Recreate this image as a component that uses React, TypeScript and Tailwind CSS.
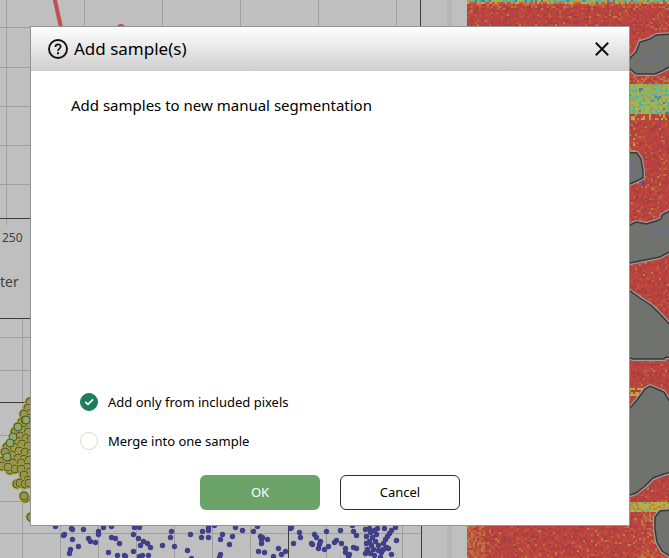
import { useState } from 'react';

type Point = [number, number];

const MAP_WIDTH = 202;
const MAP_HEIGHT = 558;

const BLUE_POINTS: Point[] = [
  [55, 526], [71, 528], [72, 529], [83, 529], [103, 527], [111, 526], [134, 527], [139, 527],
  [64, 534], [63, 535], [72, 539], [78, 546], [70, 549], [69, 553], [88, 538], [90, 541],
  [95, 542], [98, 531], [98, 534], [111, 537], [115, 538], [119, 543], [108, 552], [117, 555],
  [124, 555], [125, 556], [133, 534], [138, 538], [143, 541], [147, 543], [140, 545], [150, 547],
  [133, 551], [139, 556], [142, 555], [148, 555], [171, 531], [170, 537], [162, 545], [174, 546],
  [187, 550], [190, 534], [191, 558], [202, 531], [201, 537], [208, 527], [208, 530], [208, 537],
  [214, 525], [222, 534], [220, 539], [232, 536], [229, 544], [220, 554], [219, 557], [235, 527],
  [242, 530], [253, 531], [257, 526], [260, 536], [262, 537], [261, 539], [267, 539], [261, 543],
  [258, 551], [264, 552], [273, 556], [278, 548], [281, 554], [285, 551], [290, 528], [291, 527],
  [299, 532], [300, 537], [293, 543], [314, 534], [316, 537], [320, 541], [311, 543], [312, 544],
  [319, 544], [318, 548], [324, 549], [328, 546], [326, 531], [334, 542], [336, 540], [341, 543],
  [340, 530], [345, 548], [345, 552], [349, 554], [348, 556], [353, 547], [356, 548], [353, 531],
  [356, 535], [352, 525], [365, 529], [369, 528], [377, 528], [384, 528], [391, 530], [395, 527],
  [370, 532], [374, 530], [366, 536], [372, 537], [369, 541], [375, 541], [366, 543], [371, 545],
  [378, 545], [367, 549], [373, 549], [365, 553], [370, 553], [378, 550], [381, 552], [376, 534],
  [374, 555], [380, 557], [389, 533], [387, 536], [385, 539], [383, 543], [386, 547], [383, 549],
  [396, 540], [391, 554], [388, 548],
];

const OLIVE_POINTS: Point[] = [
  [30, 402], [28, 408], [31, 413], [24, 414], [29, 418], [22, 422], [25, 420], [30, 425],
  [18, 427], [23, 430], [28, 432], [15, 432], [20, 436], [26, 438], [31, 439], [17, 441],
  [22, 444], [28, 446], [7, 447], [14, 447], [19, 451], [25, 452], [31, 453], [5, 452],
  [12, 455], [18, 458], [24, 459], [29, 460], [3, 461], [2, 466], [13, 463], [21, 463],
  [27, 467], [10, 470], [8, 467], [15, 469], [21, 469], [30, 472], [24, 475], [28, 480],
  [17, 484], [20, 483], [25, 484], [29, 483], [25, 498], [24, 496], [31, 517],
];

const GREEN_POINTS: Point[] = [[26, 420], [18, 427], [13, 437], [10, 443], [7, 457]];

const REGIONS = [
  'M161 62 L164 57 L169 52 L173 42 L183 39 L189 35 L204 34 V66 L195 71 L188 74 L169 74 L163 69 Z',
  'M155 152 L170 153 L174 159 L176 171 L176 178 L163 184 H155 Z',
  'M155 226 L163 225 L169 222 L175 223 L179 224 L189 221 L194 219 L195 215 L204 210 V251 L193 257 L178 260 L163 263 H155 Z',
  'M155 288 L163 291 L173 298 L185 306 L194 315 L204 326 V358 L199 357 L197 359 H166 L163 358 H155 Z',
  'M155 415 L163 408 L170 400 L178 389 L183 386 L190 389 L197 392 L204 404 V472 L197 474 L186 478 L178 486 L169 493 L163 495 H155 Z',
  'M204 510 L193 511 L188 517 L188 530 L190 542 L195 551 L204 557 Z',
];

// small deterministic generator so the map looks the same on every render
function createRandom(seed: number) {
  let s = seed;
  return () => {
    s = (s * 1664525 + 1013904223) % 4294967296;
    return s / 4294967296;
  };
}

const RED_TONES = ['#ae413f', '#c2433c', '#bb4a3c', '#bf4d3d', '#b53f42', '#a0403f'];
const WARM_TONES = ['#bf6440', '#b8803f', '#c0603c', '#c0523d'];
const BAND_TONES = ['#b5b244', '#a5b34e', '#8fb560', '#6cb58c', '#4fb3ad', '#bc9d40'];
const LIME_TONES = ['#b5b244', '#b9a040', '#bd8640', '#a5b34e', '#c0aa3c'];
const TOP_TONES = ['#4fb3ad', '#6cb58c', '#3f83b5', '#a5b34e', '#bc9d40'];

function pickTone(x: number, y: number, random: () => number) {
  const pick = (tones: string[]) => tones[Math.floor(random() * tones.length)];
  const r = random();
  if (y < 2) return pick(TOP_TONES);
  if (y < 4) return r < 0.5 ? pick(LIME_TONES) : pick(WARM_TONES);
  if (y < 8 && r < 0.4) return pick(WARM_TONES);
  if (y >= 84 && y < 114) return r < 0.06 ? '#3f83b5' : pick(BAND_TONES);
  if (y >= 114 && y < 119 && r < 0.35) return pick(LIME_TONES);
  if (y >= 76 && y < 84 && r < 0.4) return pick(WARM_TONES);
  if (y >= 501 && y < 512) return r < 0.1 ? '#52b3a5' : pick(LIME_TONES);
  if (y >= 388 && y < 395 && x < 178 && r < 0.6) return pick(LIME_TONES);
  if (y >= 130 && y < 156 && x < 168 && r < 0.35) return pick(LIME_TONES);
  if (y >= 512 && x > 172 && x < 192 && r < 0.5) return pick(WARM_TONES);
  if (y > 520 && x < 18 && r < 0.6) return pick(WARM_TONES);
  if (r < 0.1) return pick(WARM_TONES);
  return r < 0.75 ? pick(RED_TONES) : null;
}

function buildTiles() {
  const random = createRandom(17);
  const tiles: Record<string, string> = {};
  for (let y = 0; y < MAP_HEIGHT; y += 2) {
    for (let x = 0; x < MAP_WIDTH; x += 2) {
      const tone = pickTone(x, y, random);
      if (tone) tiles[tone] = (tiles[tone] ?? '') + `M${x} ${y}h2v2h-2z`;
    }
  }
  return Object.entries(tiles);
}

const TILES = buildTiles();

function ScatterCharts() {
  return (
    <svg
      viewBox="0 0 467 558"
      className="h-[558px] w-[467px] shrink-0 bg-[#bfbfbf]"
      role="img"
      aria-label="Scatter charts"
    >
      <g stroke="#9f9f9f" shapeRendering="crispEdges">
        {/* upper chart grid */}
        <path d="M6.5 0V225M84.5 0V218M162.5 0V218M240.5 0V218M318.5 0V218M396.5 0V218" />
        <path d="M0 27.5H420M0 67.5H420M0 106.5H420M0 145.5H420M0 184.5H420" />
        {/* lower chart grid */}
        <path d="M22.5 318V558M60.5 318V558M98.5 318V558M136.5 318V558M174.5 318V558M212.5 318V558M250.5 318V558M326.5 318V558M364.5 318V558M402.5 318V558" />
        <path d="M0 337.5H421M0 370.5H421M0 435.5H421M0 468.5H421M0 501.5H421M0 533.5H421" />
      </g>
      <path
        d="M420.5 0V218M0 218.5H421M0 318.5H421M421.5 318V558M0 402.5H421M288.5 318V558"
        stroke="#3c3c3c"
        fill="none"
        shapeRendering="crispEdges"
      />
      <rect x="447" width="5" height="558" fill="#b6b6b6" />

      <path d="M54.500 -2L62 32" stroke="#bf5153" strokeWidth="4" />
      <circle cx="121" cy="28" r="4" fill="#bf5153" />

      <g fontFamily='"Noto Sans", sans-serif' fill="#3f3f3f">
        <text x="2" y="242" fontSize="12">250</text>
        <text x="0" y="287" fontSize="14">ter</text>
      </g>

      <g fill="#97954f" stroke="#56552a">
        {OLIVE_POINTS.map(([x, y], i) => (
          <g key={i}>
            <circle cx={x} cy={y} r="5" stroke="#a9a637" />
            <circle cx={x} cy={y} r="4" />
          </g>
        ))}
      </g>
      <g fill="#8bab6b" stroke="#56552a">
        {GREEN_POINTS.map(([x, y], i) => (
          <circle key={i} cx={x} cy={y} r="4" />
        ))}
      </g>
      <g fill="#403f8a">
        {BLUE_POINTS.map(([x, y], i) => (
          <circle key={i} cx={x + 0.5} cy={y + 0.5} r="2.700" />
        ))}
      </g>
    </svg>
  );
}

function SegmentationMap() {
  return (
    <div className="h-[558px] min-w-0 flex-1 overflow-hidden">
      <svg
        viewBox="0 0 202 558"
        preserveAspectRatio="xMinYMin slice"
        className="h-full w-full"
        role="img"
        aria-label="Segmentation map"
      >
        <rect width="202" height="558" fill="#bb423e" />
        <g shapeRendering="crispEdges">
          {TILES.map(([tone, d]) => (
            <path key={tone} d={d} fill={tone} />
          ))}
        </g>
        {REGIONS.map((d) => (
          <g key={d}>
            <path d={d} fill="#70726d" stroke="#a09c98" strokeWidth="4" />
            <path d={d} fill="#70726d" stroke="#39373b" strokeWidth="1.500" />
          </g>
        ))}
        <g fill="#70707f" opacity="0.7">
          <ellipse cx="186" cy="58" rx="12" ry="5" />
          <ellipse cx="190" cy="231" rx="12" ry="5" />
          <ellipse cx="164" cy="169" rx="6" ry="9" />
        </g>
        <rect x="175" y="182" width="2" height="3" fill="#3d57b5" />
      </svg>
    </div>
  );
}

interface RoundCheckProps {
  id: string;
  label: string;
  checked: boolean;
  onChange: (checked: boolean) => void;
}

function RoundCheck({ id, label, checked, onChange }: RoundCheckProps) {
  return (
    <div className="flex h-5 items-center gap-2.5">
      <span className="relative flex h-[18px] w-[18px]">
        <input
          id={id}
          type="checkbox"
          checked={checked}
          onChange={(e) => onChange(e.target.checked)}
          className="h-[18px] w-[18px] cursor-pointer appearance-none rounded-full border border-[#d9d9d4] bg-white checked:border-[#1c7f59] checked:bg-[#1c7f59]"
        />
        {checked && (
          <svg viewBox="0 0 18 18" className="pointer-events-none absolute inset-0" fill="none">
            <path d="M5.200 8.800L8 11.300L13 6.300" stroke="#fff" strokeWidth="1.800" />
          </svg>
        )}
      </span>
      <label htmlFor={id} className="cursor-pointer text-[13px] leading-5">
        {label}
      </label>
    </div>
  );
}

function AddSampleDialog() {
  const [includedOnly, setIncludedOnly] = useState(true);
  const [merge, setMerge] = useState(false);

  return (
    <div
      role="dialog"
      aria-labelledby="dialog-title"
      className="flex min-h-[500px] w-full flex-col border border-[#949494] bg-white text-black"
    >
      <header className="flex h-11 items-center justify-between bg-gradient-to-b from-white to-[#cecece] pr-5 pl-4">
        <div className="flex items-center gap-[3px]">
          <svg viewBox="0 0 24 24" className="h-6 w-6" fill="none" stroke="#111">
            <circle cx="11" cy="12" r="9" strokeWidth="1.900" />
            <path d="M8.400 10C8.400 6.400 13.700 6.500 13.700 9.600C13.700 11.700 11 11.500 11 14" strokeWidth="1.700" />
            <path d="M11 15.300V17.200" strokeWidth="2" />
          </svg>
          <h1 id="dialog-title" className="text-[17px] leading-6">Add sample(s)</h1>
        </div>
        <button type="button" aria-label="Close" className="cursor-pointer">
          <svg viewBox="0 0 14 14" className="h-3.5 w-3.5" stroke="#111" strokeWidth="2">
            <path d="M0.800 0.800L13.200 13.200M13.200 0.800L0.800 13.200" />
          </svg>
        </button>
      </header>

      <div className="flex flex-1 flex-col justify-between px-10 pt-6 pb-[15px]">
        <p className="text-[15px] leading-5">Add samples to new manual segmentation</p>
        <div>
          <div className="flex flex-col gap-[19px] px-[9px]">
            <RoundCheck
              id="included-only"
              label="Add only from included pixels"
              checked={includedOnly}
              onChange={setIncludedOnly}
            />
            <RoundCheck id="merge" label="Merge into one sample" checked={merge} onChange={setMerge} />
          </div>
          <div className="mt-6 flex justify-center gap-5 text-[13px]">
            <button type="button" className="h-[35px] w-[120px] cursor-pointer rounded-md bg-[#6ba368] text-white">
              OK
            </button>
            <button type="button" className="h-[35px] w-[120px] cursor-pointer rounded-md border border-[#2b2b2b] bg-white">
              Cancel
            </button>
          </div>
        </div>
      </div>
    </div>
  );
}

export default function App() {
  return (
    <main className='relative min-h-screen overflow-hidden bg-[#bfbfbf] font-["Noto_Sans",sans-serif]'>
      <div className="flex">
        <ScatterCharts />
        <SegmentationMap />
      </div>
      <div className="absolute inset-x-0 top-0 pt-[26px] pr-[39px] pl-[30px]">
        <AddSampleDialog />
      </div>
    </main>
  );
}
